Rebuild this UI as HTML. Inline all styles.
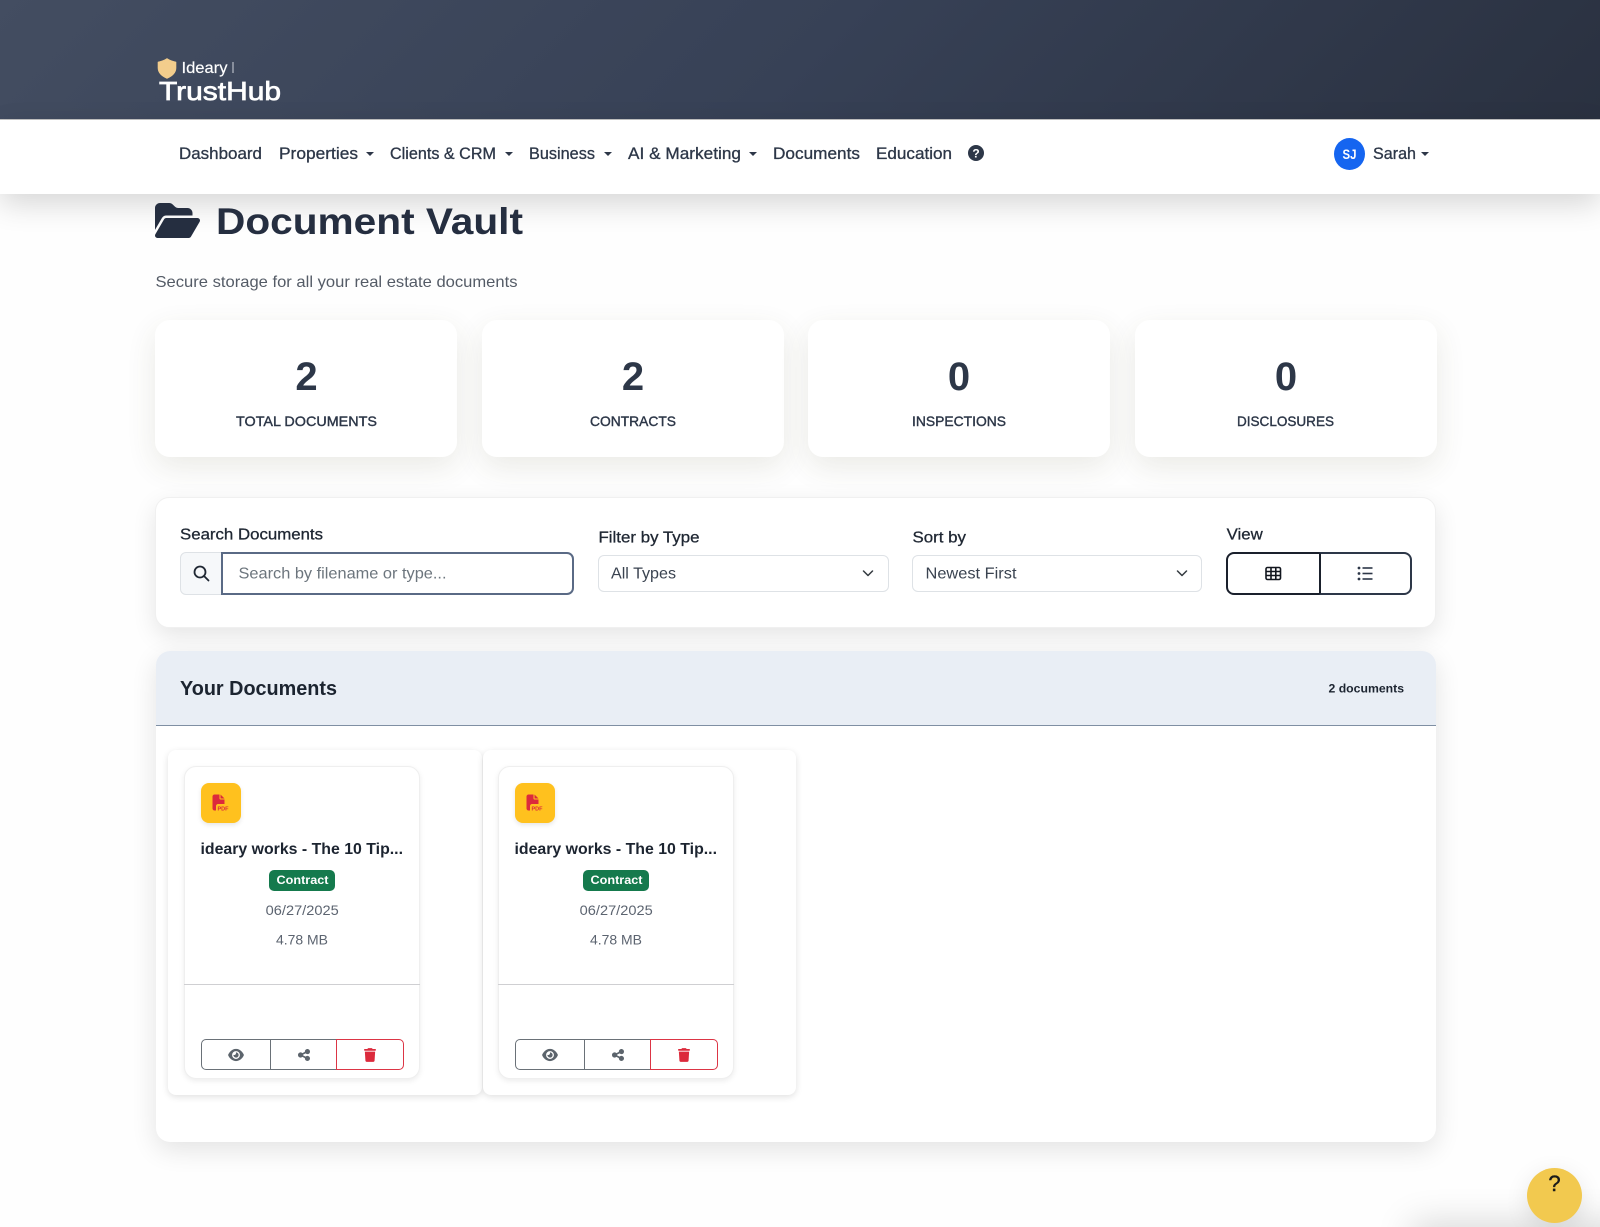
<!DOCTYPE html>
<html lang="en">
<head>
<meta charset="utf-8">
<title>Document Vault</title>
<style>
html,body{margin:0;padding:0;background:#fefefe}
*{box-sizing:border-box}
#page{position:relative;width:1600px;height:1227px;overflow:hidden;background:#fefefe}
.b{position:absolute}
.stat{top:320px;height:137px;width:302px;background:#fff;border-radius:15px;box-shadow:0 10px 30px rgba(70,70,40,.11)}
.outer{top:750px;height:345px;background:#fff;border-radius:8px;box-shadow:0 2px 7px rgba(0,0,0,.12)}
.inner{top:766px;width:236px;height:313px;background:#fff;border-radius:12px;box-shadow:0 2px 6px rgba(0,0,0,.08);border:1px solid #efefef}
#t{position:absolute;left:0;top:0}
#t text{font-family:"Liberation Sans",Arial,sans-serif}
.n{font-size:16.5px;fill:#2d3748;stroke:#2d3748;stroke-width:.3}
.l{font-size:16px;fill:#1f2733;stroke:#1f2733;stroke-width:.3}
.sl{font-size:14px;fill:#2d3748;stroke:#2d3748;stroke-width:.4}
.num{font-size:40px;font-weight:700;fill:#2d3748;text-anchor:middle}
.g{font-size:14px;fill:#5c6470}
</style>
</head>
<body>
<div id="page">
<div class="b" style="left:0;top:0;width:1600px;height:120px;background:linear-gradient(135deg,#434d61 0%,#374156 50%,#2a3140 100%);border-bottom:1px solid #c4c4c4"></div>
<div class="b" style="left:0;top:120px;width:1600px;height:74px;background:#fff;box-shadow:0 10px 30px rgba(0,0,0,.16)"></div>

<div class="b stat" style="left:155px"></div>
<div class="b stat" style="left:482px"></div>
<div class="b stat" style="left:808px"></div>
<div class="b stat" style="left:1135px"></div>

<div class="b" style="left:155px;top:497px;width:1281px;height:130.500px;background:#fff;border:1px solid #f0f0f0;border-radius:14px;box-shadow:0 8px 24px rgba(0,0,0,.10)"></div>
<div class="b" style="left:180px;top:552px;width:42px;height:43px;background:#f6f8fa;border:1px solid #dee2e6;border-radius:6px 0 0 6px"></div>
<div class="b" style="left:221px;top:552px;width:353px;height:43px;background:#fff;border:2px solid #5a6a85;border-radius:0 7px 7px 0"></div>
<div class="b" style="left:598px;top:555px;width:291px;height:37px;background:#fff;border:1px solid #dee2e6;border-radius:6px"></div>
<div class="b" style="left:912px;top:555px;width:290px;height:37px;background:#fff;border:1px solid #dee2e6;border-radius:6px"></div>
<div class="b" style="left:1226px;top:552px;width:95px;height:43px;border:2px solid #1a202c;border-radius:8px 0 0 8px"></div>
<div class="b" style="left:1319px;top:552px;width:93px;height:43px;border:2px solid #2d3748;border-left:2px solid #1a202c;border-radius:0 8px 8px 0"></div>

<div class="b" style="left:156px;top:651px;width:1280px;height:491px;background:#fff;border-radius:14px;box-shadow:0 8px 26px rgba(0,0,0,.11)"></div>
<div class="b" style="left:156px;top:651px;width:1280px;height:75px;background:#e9eef5;border-bottom:1px solid #7f8fa3;border-radius:14px 14px 0 0"></div>

<div class="b outer" style="left:168px;width:314px"></div>
<div class="b outer" style="left:483px;width:313px"></div>
<div class="b inner" style="left:184px"></div>
<div class="b inner" style="left:498px"></div>

<div class="b" style="left:184px;top:984px;width:236px;height:1px;background:#cfcfd2"></div>
<div class="b" style="left:498px;top:984px;width:236px;height:1px;background:#cfcfd2"></div>

<div class="b" style="left:201px;top:783px;width:39.500px;height:39.500px;background:#ffc11e;border-radius:8px;box-shadow:0 2px 5px rgba(0,0,0,.10)"></div>
<div class="b" style="left:515px;top:783px;width:39.500px;height:39.500px;background:#ffc11e;border-radius:8px;box-shadow:0 2px 5px rgba(0,0,0,.10)"></div>

<div class="b" style="left:269px;top:870px;width:66px;height:21px;background:#157a4d;border-radius:5px"></div>
<div class="b" style="left:583px;top:870px;width:66px;height:21px;background:#157a4d;border-radius:5px"></div>

<div class="b" style="left:201px;top:1039px;width:70px;height:31px;border:1px solid #6a7178;border-radius:5px 0 0 5px"></div>
<div class="b" style="left:270px;top:1039px;width:67px;height:31px;border:1px solid #6a7178;border-left:0"></div>
<div class="b" style="left:336px;top:1039px;width:68px;height:31px;border:1px solid #dc3545;border-radius:0 5px 5px 0"></div>
<div class="b" style="left:515px;top:1039px;width:70px;height:31px;border:1px solid #6a7178;border-radius:5px 0 0 5px"></div>
<div class="b" style="left:584px;top:1039px;width:67px;height:31px;border:1px solid #6a7178;border-left:0"></div>
<div class="b" style="left:650px;top:1039px;width:68px;height:31px;border:1px solid #dc3545;border-radius:0 5px 5px 0"></div>

<div class="b" style="left:1420px;top:1232px;width:240px;height:20px;box-shadow:0 0 36px 8px rgba(0,0,0,.17)"></div>
<div class="b" style="left:1527px;top:1168px;width:55px;height:55px;border-radius:50%;background:#f2c94f;box-shadow:0 6px 24px rgba(0,0,0,.10)"></div>

<svg id="t" width="1600" height="1227" viewBox="0 0 1600 1227" xmlns="http://www.w3.org/2000/svg">
  <!-- logo -->
  <path d="M167 58.500c3 2 6 3 9 3.500v6c0 5-3.500 8-9 10.500-5.500-2.500-9-5.500-9-10.500v-6c3-.5 6-1.500 9-3.500z" fill="#f3cd8c" stroke="#f3cd8c" stroke-width=".6" stroke-linejoin="round"/>
  <text x="181.500" y="73" font-size="16" fill="#fff" stroke="#fff" stroke-width=".15" textLength="46" lengthAdjust="spacingAndGlyphs">Ideary</text>
  <rect x="232.500" y="62" width="1" height="11" fill="#cfd3da"/>
  <text x="159" y="100" font-size="26" fill="#fff" stroke="#fff" stroke-width=".7" textLength="122" lengthAdjust="spacingAndGlyphs">TrustHub</text>

  <!-- nav -->
  <text class="n" x="179" y="159" textLength="83" lengthAdjust="spacingAndGlyphs">Dashboard</text>
  <text class="n" x="279" y="159" textLength="79" lengthAdjust="spacingAndGlyphs">Properties</text>
  <path d="M366 152h8l-4 4z" fill="#2d3748"/>
  <text class="n" x="390" y="159" textLength="106" lengthAdjust="spacingAndGlyphs">Clients &amp; CRM</text>
  <path d="M505 152h8l-4 4z" fill="#2d3748"/>
  <text class="n" x="529" y="159" textLength="66" lengthAdjust="spacingAndGlyphs">Business</text>
  <path d="M604 152h8l-4 4z" fill="#2d3748"/>
  <text class="n" x="628" y="159" textLength="113" lengthAdjust="spacingAndGlyphs">AI &amp; Marketing</text>
  <path d="M749 152h8l-4 4z" fill="#2d3748"/>
  <text class="n" x="773" y="159" textLength="87" lengthAdjust="spacingAndGlyphs">Documents</text>
  <text class="n" x="876" y="159" textLength="76" lengthAdjust="spacingAndGlyphs">Education</text>
  <circle cx="976" cy="153" r="8" fill="#2d3748"/>
  <text x="976" y="157.500" font-size="12" font-weight="700" fill="#fff" text-anchor="middle">?</text>
  <ellipse cx="1349.500" cy="154" rx="15.500" ry="16" fill="#1565f0"/>
  <text x="1342.500" y="159" font-size="14" font-weight="700" fill="#fff" textLength="14" lengthAdjust="spacingAndGlyphs">SJ</text>
  <text class="n" x="1373" y="159" textLength="43" lengthAdjust="spacingAndGlyphs">Sarah</text>
  <path d="M1421 152h8l-4 4z" fill="#2d3748"/>

  <!-- title -->
  <svg x="155" y="200.500" width="45" height="40" viewBox="0 0 576 512"><path fill="#252e40" d="M88.700 223.800L0 375.800V96C0 60.700 28.700 32 64 32H181.500c17 0 33.300 6.700 45.300 18.700l26.500 26.500c12 12 28.300 18.700 45.300 18.700H416c35.300 0 64 28.700 64 64v32H144c-22.800 0-43.800 12.100-55.300 31.800zm27.600 16.100C122.100 230 132.600 224 144 224H544c11.500 0 22 6.100 27.700 16.100s5.700 22.200-.1 32.100l-112 192C453.900 474 443.400 480 432 480H32c-11.500 0-22-6.100-27.700-16.100s-5.700-22.200 .1-32.100l112-192z"/></svg>
  <text x="216" y="234" font-size="37" font-weight="700" fill="#252e40" textLength="307" lengthAdjust="spacingAndGlyphs">Document Vault</text>
  <text x="155.500" y="287" font-size="16" fill="#545b66" textLength="362" lengthAdjust="spacingAndGlyphs">Secure storage for all your real estate documents</text>

  <!-- stats -->
  <text class="num" x="306.500" y="390">2</text>
  <text class="num" x="633" y="390">2</text>
  <text class="num" x="959" y="390">0</text>
  <text class="num" x="1286" y="390">0</text>
  <text class="sl" x="236" y="426" textLength="141" lengthAdjust="spacingAndGlyphs">TOTAL DOCUMENTS</text>
  <text class="sl" x="590" y="426" textLength="86" lengthAdjust="spacingAndGlyphs">CONTRACTS</text>
  <text class="sl" x="912" y="426" textLength="94" lengthAdjust="spacingAndGlyphs">INSPECTIONS</text>
  <text class="sl" x="1237" y="426" textLength="97" lengthAdjust="spacingAndGlyphs">DISCLOSURES</text>

  <!-- filters -->
  <text class="l" x="180" y="539.500" textLength="143" lengthAdjust="spacingAndGlyphs">Search Documents</text>
  <text class="l" x="598.500" y="542.500" textLength="101" lengthAdjust="spacingAndGlyphs">Filter by Type</text>
  <text class="l" x="912.500" y="542.500" textLength="53.500" lengthAdjust="spacingAndGlyphs">Sort by</text>
  <text class="l" x="1226.700" y="539.500" textLength="36" lengthAdjust="spacingAndGlyphs">View</text>
  <text x="238.500" y="578.500" font-size="16" fill="#6c757d" textLength="208" lengthAdjust="spacingAndGlyphs">Search by filename or type...</text>
  <text x="611" y="578.500" font-size="16" fill="#3a4350" textLength="65" lengthAdjust="spacingAndGlyphs">All Types</text>
  <text x="925.500" y="578.500" font-size="16" fill="#3a4350" textLength="91" lengthAdjust="spacingAndGlyphs">Newest First</text>
  <circle cx="200" cy="572" r="5.500" fill="none" stroke="#1f2733" stroke-width="1.800"/>
  <path d="M204 576l4.500 4.500" stroke="#1f2733" stroke-width="1.800" stroke-linecap="round"/>
  <path d="M863.500 571l4.500 4.500 4.500-4.500M1177.500 571l4.500 4.500 4.500-4.500" fill="none" stroke="#343a40" stroke-width="1.500" stroke-linecap="round" stroke-linejoin="round"/>
  <g fill="none" stroke="#12161e" stroke-width="1.600">
    <rect x="1266" y="567.500" width="14.500" height="12" rx="1.500"/>
    <path d="M1271 567.500v12M1275.800 567.500v12M1266 571.500h14.500M1266 575.500h14.500"/>
  </g>
  <g fill="#2d3748">
    <circle cx="1359" cy="568" r="1.400"/><circle cx="1359" cy="573.500" r="1.400"/><circle cx="1359" cy="579" r="1.400"/>
    <rect x="1362.500" y="567.200" width="10" height="1.600"/><rect x="1362.500" y="572.700" width="10" height="1.600"/><rect x="1362.500" y="578.200" width="10" height="1.600"/>
  </g>

  <!-- docs header -->
  <text x="180" y="695" font-size="20" font-weight="700" fill="#1c2430" textLength="157" lengthAdjust="spacingAndGlyphs">Your Documents</text>
  <text x="1328.500" y="692.300" font-size="12" font-weight="700" fill="#1c2430" textLength="75.500" lengthAdjust="spacingAndGlyphs">2 documents</text>

  <!-- doc card 1 -->
  <g>
    <svg x="212.500" y="794.500" width="16" height="16" viewBox="0 0 512 512"><path fill="#dc2a3c" d="M0 64C0 28.700 28.700 0 64 0H224V128c0 17.700 14.300 32 32 32H384V304H176c-35.300 0-64 28.700-64 64V512H64c-35.300 0-64-28.700-64-64V64zm384 64H256V0L384 128z"/></svg>
    <text x="217.500" y="810.500" font-size="5.500" font-weight="700" fill="#dc2a3c" textLength="11" lengthAdjust="spacingAndGlyphs">PDF</text>
    <text x="200.500" y="854" font-size="16" font-weight="700" fill="#1c2430" textLength="202.500" lengthAdjust="spacingAndGlyphs">ideary works - The 10 Tip...</text>
    <text x="276.500" y="884" font-size="12" font-weight="700" fill="#fff" textLength="52" lengthAdjust="spacingAndGlyphs">Contract</text>
    <text x="265.700" y="915" class="g" textLength="73" lengthAdjust="spacingAndGlyphs">06/27/2025</text>
    <text x="276" y="944.700" class="g" textLength="52" lengthAdjust="spacingAndGlyphs">4.78 MB</text>
    <svg x="228" y="1048" width="16" height="14" viewBox="0 0 576 512"><path fill="#5c646c" d="M288 32c-80.800 0-145.500 36.800-192.600 80.600C48.600 156 17.300 208 2.500 243.700c-3.300 7.900-3.300 16.700 0 24.600C17.300 304 48.600 356 95.400 399.400C142.500 443.200 207.200 480 288 480s145.500-36.800 192.600-80.600c46.800-43.500 78.100-95.400 93-131.100c3.300-7.900 3.300-16.700 0-24.600c-14.900-35.700-46.200-87.700-93-131.100C433.500 68.800 368.800 32 288 32zM144 256a144 144 0 1 1 288 0 144 144 0 1 1 -288 0zm144-64c0 35.300-28.700 64-64 64c-7.100 0-13.900-1.200-20.300-3.300c-5.500-1.800-11.900 1.600-11.700 7.400c.3 6.900 1.300 13.800 3.200 20.700c13.700 51.200 66.400 81.600 117.600 67.900s81.600-66.400 67.900-117.600c-11.100-41.500-47.800-69.400-88.600-71.100c-5.800-.2-9.200 6.100-7.400 11.700c2.100 6.400 3.300 13.200 3.300 20.300z"/></svg>
    <svg x="298" y="1048" width="12" height="14" viewBox="0 0 448 512"><path fill="#5c646c" d="M352 224c53 0 96-43 96-96s-43-96-96-96s-96 43-96 96c0 4 .2 8 .7 11.900l-94.100 47C145.400 170.200 121.900 160 96 160c-53 0-96 43-96 96s43 96 96 96c25.900 0 49.400-10.200 66.600-26.900l94.100 47c-.5 3.900-.7 7.800-.7 11.900c0 53 43 96 96 96s96-43 96-96s-43-96-96-96c-25.900 0-49.400 10.200-66.600 26.900l-94.100-47c.5-3.900 .7-7.800 .7-11.900s-.2-8-.7-11.900l94.100-47C302.600 213.800 326.100 224 352 224z"/></svg>
    <svg x="364" y="1048" width="12" height="14" viewBox="0 0 448 512"><path fill="#dc2a3c" d="M135.200 17.700L128 32H32C14.300 32 0 46.300 0 64S14.300 96 32 96H416c17.700 0 32-14.300 32-32s-14.300-32-32-32H320l-7.200-14.300C307.400 6.800 296.300 0 284.200 0H163.800c-12.100 0-23.200 6.800-28.600 17.700zM416 128H32L53.200 467c1.600 25.300 22.600 45 47.900 45H346.900c25.300 0 46.300-19.700 47.900-45L416 128z"/></svg>
  </g>

  <!-- doc card 2 -->
  <g transform="translate(314 0)">
    <svg x="212.500" y="794.500" width="16" height="16" viewBox="0 0 512 512"><path fill="#dc2a3c" d="M0 64C0 28.700 28.700 0 64 0H224V128c0 17.700 14.300 32 32 32H384V304H176c-35.300 0-64 28.700-64 64V512H64c-35.300 0-64-28.700-64-64V64zm384 64H256V0L384 128z"/></svg>
    <text x="217.500" y="810.500" font-size="5.500" font-weight="700" fill="#dc2a3c" textLength="11" lengthAdjust="spacingAndGlyphs">PDF</text>
    <text x="200.500" y="854" font-size="16" font-weight="700" fill="#1c2430" textLength="202.500" lengthAdjust="spacingAndGlyphs">ideary works - The 10 Tip...</text>
    <text x="276.500" y="884" font-size="12" font-weight="700" fill="#fff" textLength="52" lengthAdjust="spacingAndGlyphs">Contract</text>
    <text x="265.700" y="915" class="g" textLength="73" lengthAdjust="spacingAndGlyphs">06/27/2025</text>
    <text x="276" y="944.700" class="g" textLength="52" lengthAdjust="spacingAndGlyphs">4.78 MB</text>
    <svg x="228" y="1048" width="16" height="14" viewBox="0 0 576 512"><path fill="#5c646c" d="M288 32c-80.800 0-145.500 36.800-192.600 80.600C48.600 156 17.300 208 2.500 243.700c-3.300 7.900-3.300 16.700 0 24.600C17.300 304 48.600 356 95.400 399.400C142.500 443.200 207.200 480 288 480s145.500-36.800 192.600-80.600c46.800-43.500 78.100-95.400 93-131.100c3.300-7.900 3.300-16.700 0-24.600c-14.900-35.700-46.200-87.700-93-131.100C433.500 68.800 368.800 32 288 32zM144 256a144 144 0 1 1 288 0 144 144 0 1 1 -288 0zm144-64c0 35.300-28.700 64-64 64c-7.100 0-13.900-1.200-20.300-3.300c-5.500-1.800-11.900 1.600-11.700 7.400c.3 6.900 1.300 13.800 3.200 20.700c13.700 51.200 66.400 81.600 117.600 67.900s81.600-66.400 67.900-117.600c-11.100-41.500-47.800-69.400-88.600-71.100c-5.800-.2-9.200 6.100-7.400 11.700c2.100 6.400 3.300 13.200 3.300 20.300z"/></svg>
    <svg x="298" y="1048" width="12" height="14" viewBox="0 0 448 512"><path fill="#5c646c" d="M352 224c53 0 96-43 96-96s-43-96-96-96s-96 43-96 96c0 4 .2 8 .7 11.900l-94.100 47C145.400 170.200 121.900 160 96 160c-53 0-96 43-96 96s43 96 96 96c25.900 0 49.400-10.200 66.600-26.900l94.100 47c-.5 3.900-.7 7.800-.7 11.900c0 53 43 96 96 96s96-43 96-96s-43-96-96-96c-25.900 0-49.400 10.200-66.600 26.900l-94.100-47c.5-3.900 .7-7.800 .7-11.900s-.2-8-.7-11.900l94.100-47C302.600 213.800 326.100 224 352 224z"/></svg>
    <svg x="364" y="1048" width="12" height="14" viewBox="0 0 448 512"><path fill="#dc2a3c" d="M135.200 17.700L128 32H32C14.300 32 0 46.300 0 64S14.300 96 32 96H416c17.700 0 32-14.300 32-32s-14.300-32-32-32H320l-7.200-14.300C307.400 6.800 296.300 0 284.200 0H163.800c-12.100 0-23.200 6.800-28.600 17.700zM416 128H32L53.200 467c1.600 25.300 22.600 45 47.900 45H346.900c25.300 0 46.300-19.700 47.900-45L416 128z"/></svg>
  </g>

  <!-- help -->
  <text x="1554.500" y="1191" font-size="22" fill="#1a1a1a" stroke="#1a1a1a" stroke-width=".4" text-anchor="middle">?</text>
</svg>
</div>
</body>
</html>
